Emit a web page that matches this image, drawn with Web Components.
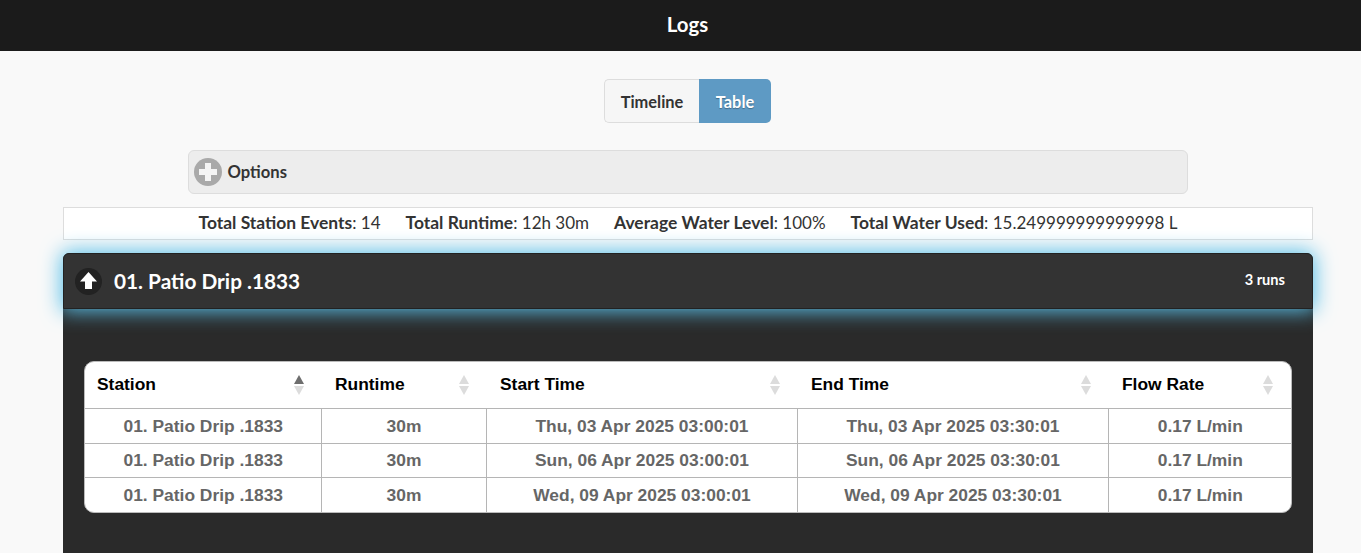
<!DOCTYPE html>
<html>
<head>
<meta charset="utf-8">
<title>Logs</title>
<style>
  html { height: 553px; overflow: hidden; }
  body { margin: 0; width: 1375px; background: #f9f9f9; font-family: Lato, "Liberation Sans", sans-serif; color: #333; }
</style>
</head>
<body>
<logs-header>Logs</logs-header>
<view-toggle></view-toggle>
<options-bar>Options</options-bar>
<totals-bar></totals-bar>
<station-panel name="01. Patio Drip .1833" count="3 runs">
  <runs-table></runs-table>
</station-panel>

<script>
(function() {
  class LogsHeader extends HTMLElement {
    constructor() {
      super();
      this.attachShadow({ mode: 'open' });
      this.shadowRoot.innerHTML = `
        <style>
          :host {
            display: flex;
            height: 51px;
            align-items: center;
            justify-content: center;
            background: #1b1b1b;
            color: #fff;
            font-size: 20.4px;
            font-weight: 700;
            padding-bottom: 4px;
            box-sizing: border-box;
          }
        </style>
        <slot></slot>
      `;
    }
  }

  class ViewToggle extends HTMLElement {
    constructor() {
      super();
      this.attachShadow({ mode: 'open' });
      this.shadowRoot.innerHTML = `
        <style>
          :host {
            display: flex;
            justify-content: center;
            padding-top: 28px;
          }
          .btn {
            height: 44px;
            box-sizing: border-box;
            display: flex;
            align-items: center;
            font-size: 16.4px;
            font-weight: 700;
          }
          .timeline {
            width: 95px;
            justify-content: center;
            background: #f6f6f6;
            color: #333;
            border: 1px solid #ddd;
            border-right: 0;
            border-radius: 5px 0 0 5px;
          }
          .table {
            width: 72px;
            justify-content: center;
            background: #5e9ac4;
            color: #fff;
            border-radius: 0 5px 5px 0;
            text-shadow: 0 1px 1px rgba(0, 0, 0, 0.3);
          }
        </style>
        <div class="btn timeline">Timeline</div>
        <div class="btn table">Table</div>
      `;
    }
  }

  class OptionsBar extends HTMLElement {
    constructor() {
      super();
      this.attachShadow({ mode: 'open' });
      this.shadowRoot.innerHTML = `
        <style>
          :host {
            display: flex;
            align-items: center;
            gap: 6px;
            width: 1000px;
            height: 44px;
            box-sizing: border-box;
            margin: 27px auto 0;
            padding-left: 5px;
            background: #ededed;
            border: 1px solid #ddd;
            border-radius: 6px;
            font-size: 16.6px;
            font-weight: 700;
            color: #333;
          }
          svg { display: block; }
        </style>
        <svg width="28" height="28" viewBox="0 0 28 28">
          <circle cx="14" cy="14" r="14" fill="#a9a9a9"/>
          <path d="M11 5h6v6h6v6h-6v6h-6v-6H5v-6h6z" fill="#f4f4f4"/>
        </svg>
        <slot></slot>
      `;
    }
  }

  class TotalsBar extends HTMLElement {
    constructor() {
      super();
      this.attachShadow({ mode: 'open' });
      this.shadowRoot.innerHTML = `
        <style>
          :host {
            display: flex;
            justify-content: center;
            gap: 25px;
            width: 1250px;
            height: 33px;
            box-sizing: border-box;
            margin: 13px 0 0 63px;
            background: #fff;
            border: 1px solid #ddd;
            font-size: 17px;
            line-height: 30px;
            color: #333;
          }
          b { font-weight: 700; font-size: 17.45px; }
        </style>
        <span><b>Total Station Events</b>: 14</span>
        <span><b>Total Runtime</b>: 12h 30m</span>
        <span><b>Average Water Level</b>: 100%</span>
        <span><b>Total Water Used</b>: 15.249999999999998 L</span>
      `;
    }
  }

  class StationPanel extends HTMLElement {
    constructor() {
      super();
      this.attachShadow({ mode: 'open' });
      this.shadowRoot.innerHTML = `
        <style>
          :host {
            display: block;
            width: 1250px;
            margin: 13px 0 0 63px;
            background: #2a2a2a;
            border-radius: 6px 6px 0 0;
          }
          .head {
            display: flex;
            align-items: center;
            height: 56px;
            box-sizing: border-box;
            padding: 0 27px 0 11px;
            background: #333;
            border: 1px solid #222;
            border-radius: 6px 6px 0 0;
            box-shadow: 0 0 20px 2px #5bc0e8;
            color: #fff;
            font-weight: 700;
            position: relative;
          }
          .icon { margin-right: 12px; display: block; }
          .name { font-size: 20.8px; flex: 1; padding-bottom: 2px; }
          .count { font-size: 14.6px; padding-bottom: 3px; }
          .body { padding: 52px 21px 40px; }
        </style>
        <div class="head">
          <svg class="icon" width="27" height="27" viewBox="0 0 27 27">
            <circle cx="13.500" cy="13.500" r="13.500" fill="#222"/>
            <path d="M13.500 4L22 13.500H17V21H10V13.500H5z" fill="#fff"/>
          </svg>
          <span class="name"></span>
          <span class="count"></span>
        </div>
        <div class="body"><slot></slot></div>
      `;
    }

    connectedCallback() {
      this.shadowRoot.querySelector('.name').textContent = this.getAttribute('name');
      this.shadowRoot.querySelector('.count').textContent = this.getAttribute('count');
    }
  }

  const COLUMNS = [
    { title: 'Station', width: 236, active: true },
    { title: 'Runtime', width: 165 },
    { title: 'Start Time', width: 311 },
    { title: 'End Time', width: 311 },
    { title: 'Flow Rate', width: 183 }
  ];

  const RUNS = [
    ['01. Patio Drip .1833', '30m', 'Thu, 03 Apr 2025 03:00:01', 'Thu, 03 Apr 2025 03:30:01', '0.17 L/min'],
    ['01. Patio Drip .1833', '30m', 'Sun, 06 Apr 2025 03:00:01', 'Sun, 06 Apr 2025 03:30:01', '0.17 L/min'],
    ['01. Patio Drip .1833', '30m', 'Wed, 09 Apr 2025 03:00:01', 'Wed, 09 Apr 2025 03:30:01', '0.17 L/min']
  ];

  class RunsTable extends HTMLElement {
    constructor() {
      super();
      this.attachShadow({ mode: 'open' });
      const head = COLUMNS.map(c => `
        <th style="width:${c.width}px">
          <div class="th">${c.title}
            <svg width="12" height="22" viewBox="0 0 12 22">
              <path d="M6 1l5 9H1z" fill="${c.active ? '#6e6e6e' : '#dcdcdc'}"/>
              <path d="M6 21l5-9H1z" fill="#dcdcdc"/>
            </svg>
          </div>
        </th>`).join('');
      const rows = RUNS.map(r => `<tr>${r.map(v => `<td>${v}</td>`).join('')}</tr>`).join('');
      this.shadowRoot.innerHTML = `
        <style>
          :host {
            display: block;
            box-sizing: border-box;
            height: 152px;
            background: #fff;
            border: 1px solid #bbb;
            border-radius: 10px;
            overflow: hidden;
            font-family: "Liberation Sans", Arial, sans-serif;
            font-weight: 700;
            font-size: 17.4px;
          }
          table { width: 100%; border-collapse: collapse; table-layout: fixed; }
          th { height: 46px; padding: 0 16px 0 14px; box-sizing: border-box; color: #000; text-align: left; border-bottom: 1px solid #b5b5b5; font-weight: 700; }
          th:first-child { padding-left: 12px; }
          th:last-child { padding-right: 17px; }
          .th { display: flex; justify-content: space-between; align-items: center; }
          td { box-sizing: border-box; height: 35px; padding: 0 0 0 1px; text-align: center; color: #666; border-bottom: 1px solid #b5b5b5; border-right: 1px solid #b5b5b5; line-height: 20px; }
          tr:nth-child(2) td { height: 34px; }
          td:last-child { border-right: 0; }
          tr:last-child td { border-bottom: 0; }
        </style>
        <table>
          <thead><tr>${head}</tr></thead>
          <tbody>${rows}</tbody>
        </table>
      `;
    }
  }

  window.customElements.define('logs-header', LogsHeader);
  window.customElements.define('view-toggle', ViewToggle);
  window.customElements.define('options-bar', OptionsBar);
  window.customElements.define('totals-bar', TotalsBar);
  window.customElements.define('station-panel', StationPanel);
  window.customElements.define('runs-table', RunsTable);
})();
</script>
</body>
</html>
